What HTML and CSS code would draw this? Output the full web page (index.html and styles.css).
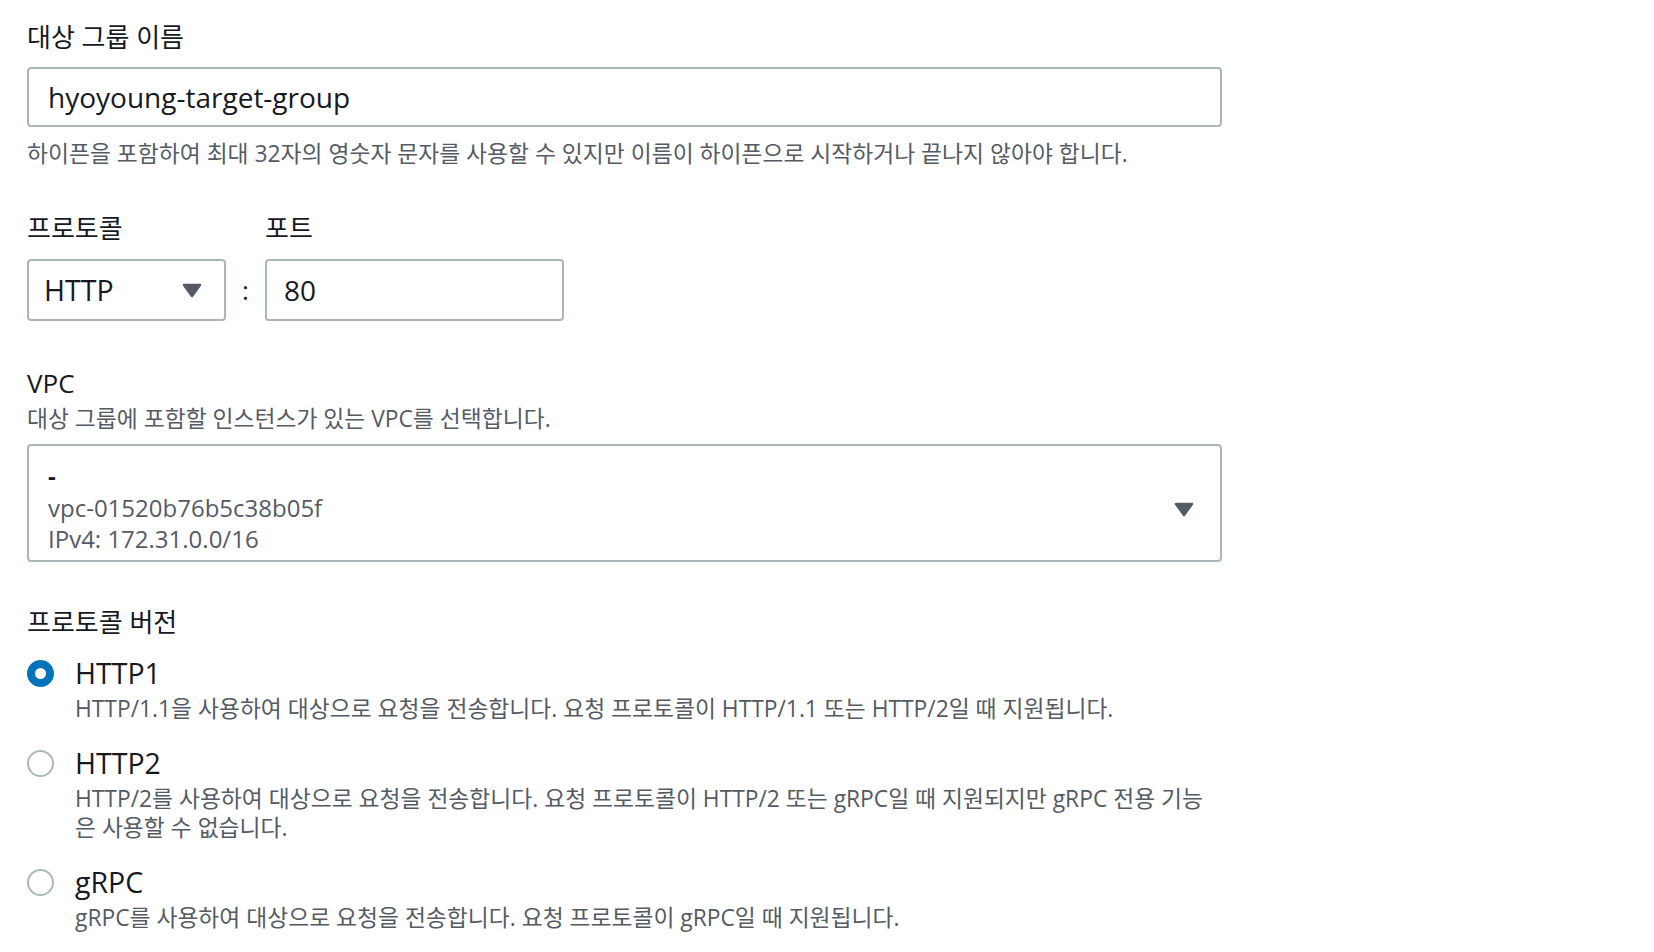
FILE: index.html
```html
<!DOCTYPE html>
<html lang="ko">
<head>
  <meta charset="UTF-8">
  <meta name="viewport" content="width=device-width, initial-scale=1.0">
  <title>대상 그룹 생성</title>
  <link rel="stylesheet" href="styles.css">
</head>
<body>
  <form class="settings">
    <div class="field">
      <label class="label" for="groupName">대상 그룹 이름</label>
      <input class="text-input" id="groupName" type="text" value="hyoyoung-target-group">
      <p class="desc hint">하이픈을 포함하여 최대 32자의 영숫자 문자를 사용할 수 있지만 이름이 하이픈으로 시작하거나 끝나지 않아야 합니다.</p>
    </div>

    <div class="field proto-row">
      <span class="label">프로토콜</span>
      <span></span>
      <label class="label" for="port">포트</label>
      <div class="select">
        <span>HTTP</span>
        <svg class="caret" width="20" height="15" viewBox="0 0 20 15"><path d="M2 2h16l-8 11z" fill="#545b64" stroke="#545b64" stroke-width="2.5" stroke-linejoin="round"/></svg>
      </div>
      <span class="colon">:</span>
      <input class="text-input port" id="port" type="text" value="80">
    </div>

    <div class="field vpc-field">
      <span class="label">VPC</span>
      <p class="desc sub">대상 그룹에 포함할 인스턴스가 있는 VPC를 선택합니다.</p>
      <div class="select vpc">
        <div class="option">
          <div class="option-label">-</div>
          <div class="option-tag">vpc-01520b76b5c38b05f</div>
          <div class="option-tag">IPv4: 172.31.0.0/16</div>
        </div>
        <svg class="caret" width="20" height="15" viewBox="0 0 20 15"><path d="M2 2h16l-8 11z" fill="#545b64" stroke="#545b64" stroke-width="2.5" stroke-linejoin="round"/></svg>
      </div>
    </div>

    <div class="field version-field">
      <span class="label">프로토콜 버전</span>
      <div class="radio-group">
        <div class="radio-item">
          <span class="radio checked"></span>
          <div class="radio-body">
            <div class="radio-title">HTTP1</div>
            <p class="desc">HTTP/1.1을 사용하여 대상으로 요청을 전송합니다. 요청 프로토콜이 HTTP/1.1 또는 HTTP/2일 때 지원됩니다.</p>
          </div>
        </div>
        <div class="radio-item">
          <span class="radio"></span>
          <div class="radio-body">
            <div class="radio-title">HTTP2</div>
            <p class="desc">HTTP/2를 사용하여 대상으로 요청을 전송합니다. 요청 프로토콜이 HTTP/2 또는 gRPC일 때 지원되지만 gRPC 전용 기능은 사용할 수 없습니다.</p>
          </div>
        </div>
        <div class="radio-item">
          <span class="radio"></span>
          <div class="radio-body">
            <div class="radio-title">gRPC</div>
            <p class="desc">gRPC를 사용하여 대상으로 요청을 전송합니다. 요청 프로토콜이 gRPC일 때 지원됩니다.</p>
          </div>
        </div>
      </div>
    </div>
  </form>
</body>
</html>
```

FILE: styles.css
```css
body {
  margin: 0;
  padding: 21px 0 0 27px;
  font-family: "Open Sans", "Noto Sans CJK KR", sans-serif;
  color: #16191f;
  background-color: #fff;
}
.settings {
  width: 1195px;
}
.label {
  display: block;
  font-size: 26px;
  line-height: 32px;
}
.desc {
  margin: 0;
  font-size: 22.8px;
  line-height: 29px;
  color: #545b64;
}
.text-input {
  display: block;
  box-sizing: border-box;
  width: 100%;
  height: 60px;
  margin-top: 14px;
  padding: 0 19px;
  border: 2px solid #aab7b8;
  border-radius: 4px;
  font-family: inherit;
  font-size: 28px;
  color: #16191f;
  background-color: #fff;
}
.hint {
  margin-top: 11.5px;
}
.proto-row {
  display: grid;
  grid-template-columns: 199px 39px 299px;
  grid-template-rows: 32px 62px;
  row-gap: 15px;
  margin-top: 44.5px;
}
.proto-row .text-input {
  height: 62px;
  margin-top: 0;
  padding: 0 17px;
}
.select {
  display: flex;
  align-items: center;
  justify-content: space-between;
  box-sizing: border-box;
  height: 62px;
  padding: 0 22px 0 15px;
  border: 2px solid #aab7b8;
  border-radius: 4px;
  font-size: 28.5px;
}
.colon {
  font-size: 26px;
  line-height: 62px;
  text-align: center;
}
.vpc-field {
  margin-top: 46px;
}
.sub {
  margin-top: 4.5px;
}
.select.vpc {
  height: 118px;
  margin-top: 11.5px;
  align-items: flex-start;
  padding: 12.5px 26px 0 19px;
}
.select.vpc .caret {
  align-self: center;
}
.option-label {
  font-size: 24px;
  font-weight: 700;
  line-height: 33px;
}
.option-tag {
  font-size: 24px;
  line-height: 31px;
  color: #545b64;
}
.version-field {
  margin-top: 44px;
}
.radio-group {
  display: flex;
  flex-direction: column;
  gap: 23.5px;
  margin-top: 18px;
}
.radio-item {
  display: grid;
  grid-template-columns: 27px 1137px;
  column-gap: 21px;
}
.radio {
  box-sizing: border-box;
  width: 27px;
  height: 27px;
  margin-top: 3.5px;
  border: 2px solid #aab7b8;
  border-radius: 50%;
  background-color: #fff;
}
.radio.checked {
  border: 8.5px solid #0073bb;
}
.radio-title {
  font-size: 28.5px;
  line-height: 34px;
}
.radio-body .desc {
  margin-top: 3.5px;
}
```
